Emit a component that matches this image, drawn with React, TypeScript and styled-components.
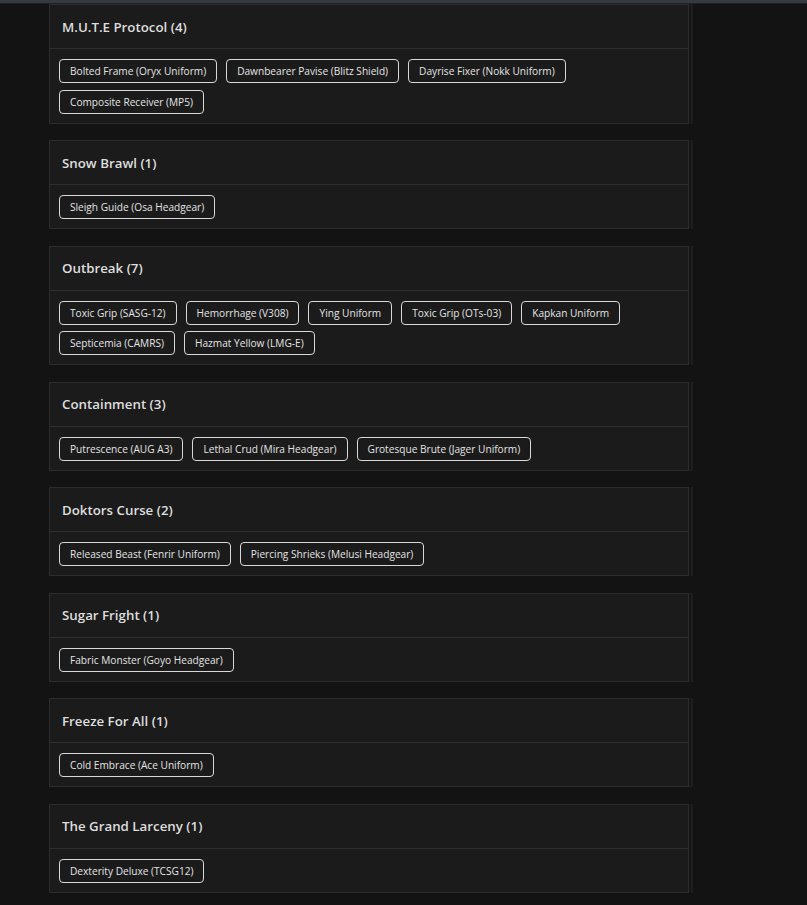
import React from "react";
import styled, { createGlobalStyle } from "styled-components";

const Global = createGlobalStyle`
  html, body { margin: 0; padding: 0; background: #131313; }
  body { font-family: "Open Sans", "Liberation Sans", sans-serif; }
`;

const TopStrip = styled.div`
  height: 3px;
  background: #353a42;
  border-bottom: 1px solid #1f2227;
`;

const Page = styled.div`
  padding: 0 0 14px 49px;
  display: flex;
  flex-direction: column;
  gap: 16.5px;
  width: 640px;
`;

const Card = styled.section`
  background: #1b1b1b;
  border: 1px solid #2c2c2c;
  box-shadow: 2px 0 0 #161616, 4px 0 0 #1e1e1e;
`;

const Header = styled.h2`
  margin: 0;
  height: 43px;
  display: flex;
  align-items: center;
  padding: 0 12px;
  border-bottom: 1px solid #2e2e2e;
  font-size: 13.3px;
  font-weight: 600;
  color: #dedede;
`;

const Body = styled.div`
  display: flex;
  flex-wrap: wrap;
  gap: 6.5px 9px;
  padding: 10px 9px 9px;
`;

const Chip = styled.span`
  display: inline-flex;
  align-items: center;
  height: 22px;
  padding: 0 10px;
  border: 1px solid #d8d8d8;
  border-radius: 4px;
  font-size: 10.15px;
  color: #e4e4e4;
  white-space: nowrap;
`;

const data: { title: string; items: string[] }[] = [
  {
    title: "M.U.T.E Protocol (4)",
    items: [
      "Bolted Frame (Oryx Uniform)",
      "Dawnbearer Pavise (Blitz Shield)",
      "Dayrise Fixer (Nokk Uniform)",
      "Composite Receiver (MP5)",
    ],
  },
  { title: "Snow Brawl (1)", items: ["Sleigh Guide (Osa Headgear)"] },
  {
    title: "Outbreak (7)",
    items: [
      "Toxic Grip (SASG-12)",
      "Hemorrhage (V308)",
      "Ying Uniform",
      "Toxic Grip (OTs-03)",
      "Kapkan Uniform",
      "Septicemia (CAMRS)",
      "Hazmat Yellow (LMG-E)",
    ],
  },
  {
    title: "Containment (3)",
    items: [
      "Putrescence (AUG A3)",
      "Lethal Crud (Mira Headgear)",
      "Grotesque Brute (Jager Uniform)",
    ],
  },
  {
    title: "Doktors Curse (2)",
    items: ["Released Beast (Fenrir Uniform)", "Piercing Shrieks (Melusi Headgear)"],
  },
  { title: "Sugar Fright (1)", items: ["Fabric Monster (Goyo Headgear)"] },
  { title: "Freeze For All (1)", items: ["Cold Embrace (Ace Uniform)"] },
  { title: "The Grand Larceny (1)", items: ["Dexterity Deluxe (TCSG12)"] },
];

export default function App() {
  return (
    <>
      <Global />
      <TopStrip />
      <Page>
        {data.map((c) => (
          <Card key={c.title}>
            <Header>{c.title}</Header>
            <Body>
              {c.items.map((i) => (
                <Chip key={i}>{i}</Chip>
              ))}
            </Body>
          </Card>
        ))}
      </Page>
    </>
  );
}
